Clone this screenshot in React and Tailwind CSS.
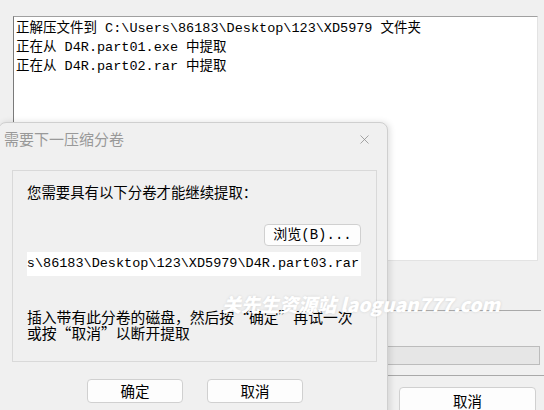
import { X } from 'lucide-react';

const mono = 'font-["Liberation_Mono","Noto_Sans_CJK_SC",monospace]';
const cjk = 'font-["Noto_Sans_CJK_SC","Liberation_Sans",sans-serif]';

const logLines = [
  '正解压文件到 C:\\Users\\86183\\Desktop\\123\\XD5979 文件夹',
  '正在从 D4R.part01.exe 中提取',
  '正在从 D4R.part02.rar 中提取'
];

function WinButton({ children, className = '' }) {
  return (
    <button
      className={`flex items-center justify-center rounded-[4px] border border-[#d0d0d0] bg-[#fdfdfd] text-[14.5px] text-black ${className}`}
    >
      {children}
    </button>
  );
}

function BackgroundWindow() {
  return (
    <div className="flex flex-col">
      <div className="pl-[13px] pr-[6px] pt-[16px]">
        <div
          className={`h-[245px] border border-t-[#a0a0a0] border-l-[#7a7a7a] border-r-[#e3e3e3] border-b-[#e3e3e3] bg-white pl-[2px] pt-[2px] text-[13.5px] leading-[19px] text-black ${mono}`}
        >
          {logLines.map((line) => (
            <div key={line} className="whitespace-pre">
              {line}
            </div>
          ))}
        </div>
      </div>

      <div className="mt-[49px] mr-[3px] h-px bg-[#a9a9a9]" />

      <div className="ml-[300px] mr-[4px] mt-[35px] h-[19px] border border-[#bcbcbc] bg-[#e6e6e6]" />

      <div className="mt-[10px] h-px bg-[#a9a9a9]" />

      <div className="ml-[399px] mt-[11px]">
        <WinButton className={`h-[32px] w-[137px] pb-[4px] ${cjk}`}>取消</WinButton>
      </div>
    </div>
  );
}

function VolumeDialog() {
  return (
    <div className="absolute left-[-2px] top-[122px] flex h-[300px] w-[390px] flex-col rounded-t-[8px] border border-[#cfcfcf] bg-[#f0f0f0] shadow-[2px_0_6px_rgba(0,0,0,0.12)]">
      <div className="flex h-[32px] items-center justify-between pl-[5px] pr-[15px]">
        <span className={`text-[15px] text-[#999999] ${cjk}`}>需要下一压缩分卷</span>
        <X size={15} strokeWidth={1.2} className="text-[#8a8a8a]" />
      </div>

      <div className="ml-[13px] mt-[15px] flex h-[192px] w-[365px] flex-col border border-[#d9d9d9] bg-[#f0f0f0] px-[14px]">
        <div className={`mt-[11px] text-[14.4px] leading-[20px] text-black ${cjk}`}>
          您需要具有以下分卷才能继续提取：
        </div>

        <div className="mt-[22px] flex justify-end pr-[1px]">
          <WinButton className={`h-[22px] w-[97px] text-[14px] ${mono}`}>浏览(B)...</WinButton>
        </div>

        <div
          className={`mt-[6px] flex h-[24px] w-[334px] items-center justify-end overflow-hidden bg-white pr-[2px] text-[13.5px] text-black ${mono}`}
        >
          <span className="whitespace-pre">C:\Users\86183\Desktop\123\XD5979\D4R.part03.rar</span>
        </div>

        <div className={`mt-[33px] text-[14.8px] leading-[16px] text-black ${cjk}`} lang="zh-CN">
          <div>插入带有此分卷的磁盘，然后按“确定”再试一次</div>
          <div>或按“取消”以断开提取</div>
        </div>
      </div>

      <div className="mt-[17px] flex gap-[24px] pl-[88px]">
        <WinButton className={`h-[24px] w-[96px] ${cjk}`}>确定</WinButton>
        <WinButton className={`h-[24px] w-[96px] ${cjk}`}>取消</WinButton>
      </div>
    </div>
  );
}

export default function App() {
  return (
    <div className="relative h-[410px] w-[544px] overflow-hidden bg-[#f0f0f0]">
      <BackgroundWindow />
      <VolumeDialog />
      <div
        className={`pointer-events-none absolute left-[222px] top-[290px] whitespace-pre text-[19px] font-black italic text-white [text-shadow:0_0_3px_rgba(0,0,0,0.12)] ${cjk}`}
      >
        关先生资源站 laoguan777.com
      </div>
    </div>
  );
}
